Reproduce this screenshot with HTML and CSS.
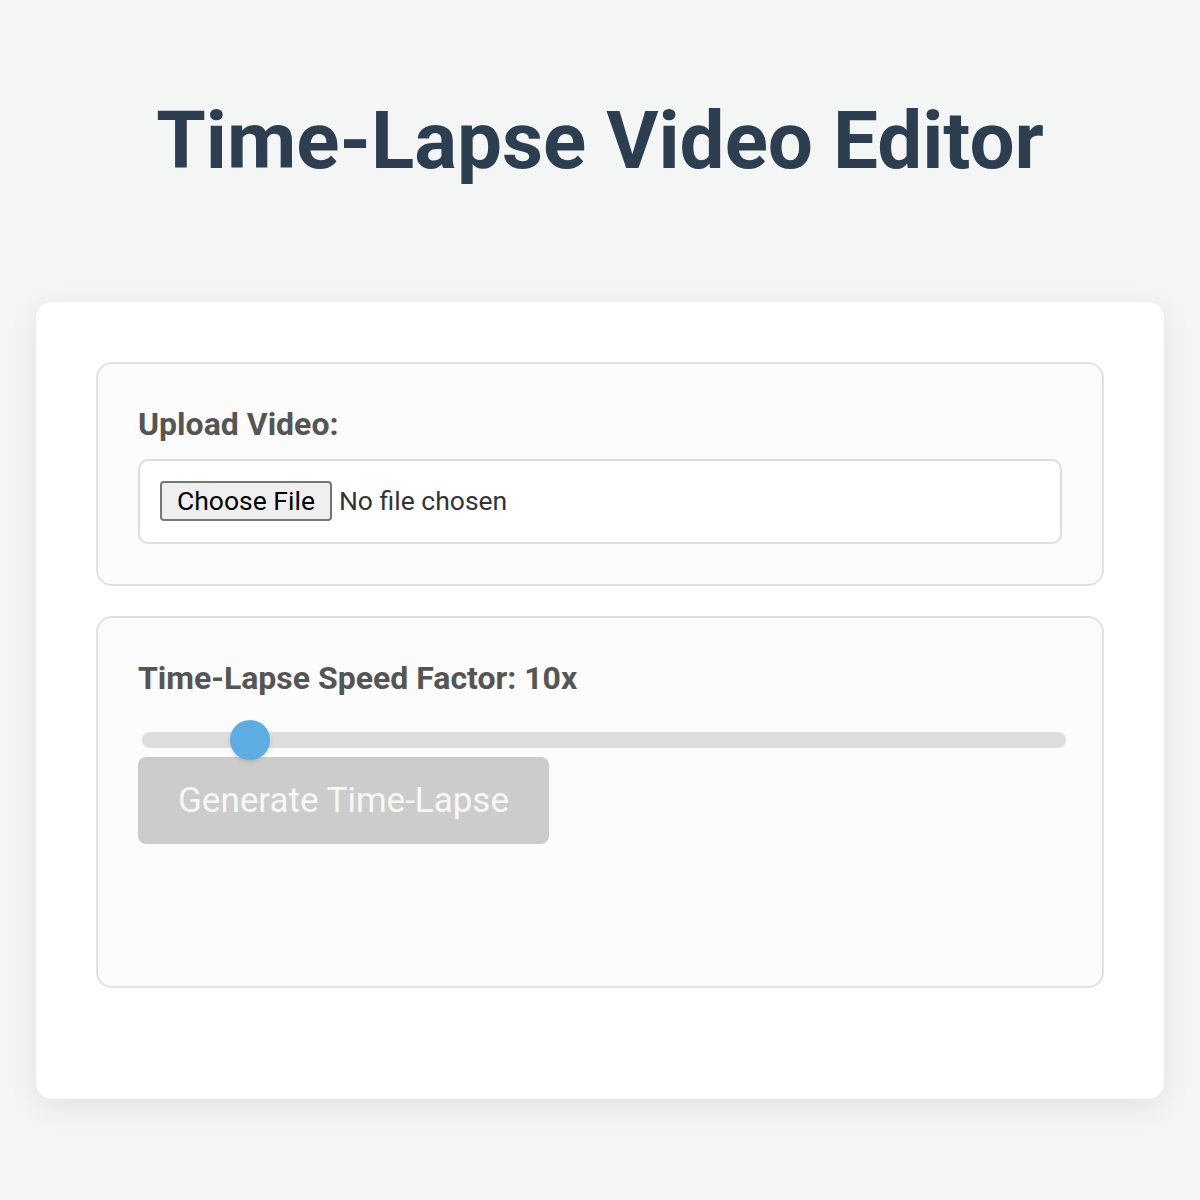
FILE: index.html
```html
<!DOCTYPE html>
<html lang="en">
<head>
    <meta charset="UTF-8">
    <meta name="viewport" content="width=device-width, initial-scale=1.0">
    <title>Time-Lapse Video Editor</title>
    <link rel="stylesheet" href="styles.css">
</head>
<body>
    <h1 class="title">Time-Lapse Video Editor</h1>

    <div class="editor">
        <div class="panel">
            <label class="panel-label" for="video">Upload Video:</label>
            <input type="file" id="video" class="file-input" accept="video/*">
        </div>

        <div class="panel">
            <label class="panel-label" for="speed">Time-Lapse Speed Factor: <span id="speed-value">10</span>x</label>
            <input type="range" id="speed" class="speed-slider" min="0" max="100" value="10">
            <button id="generate" class="generate-btn" disabled>Generate Time-Lapse</button>
            <div class="preview"></div>
        </div>

        <div class="status"></div>
    </div>

    <script>
        const speed = document.getElementById('speed');
        const speedValue = document.getElementById('speed-value');
        const video = document.getElementById('video');
        const generate = document.getElementById('generate');

        speed.addEventListener('input', () => {
            speedValue.textContent = speed.value;
        });

        video.addEventListener('change', () => {
            generate.disabled = !video.files.length;
        });
    </script>
</body>
</html>
```

FILE: styles.css
```css
body {
    margin: 0;
    padding: 40px 36px;
    background-color: #f4f6f6;
    font-family: Roboto, "Liberation Sans", Arial, sans-serif;
}
.title {
    margin: 53.6px 0;
    text-align: center;
    font-size: 80px;
    font-weight: 700;
    color: #2c3e50;
}
.editor {
    margin-top: 114px;
    padding: 60px;
    background-color: #ffffff;
    border-radius: 16px;
    box-shadow: 0 8px 30px rgba(0, 0, 0, 0.08);
}
.panel {
    margin-bottom: 30px;
    padding: 40px;
    background-color: #fcfcfc;
    border: 2px solid #e2e2e2;
    border-radius: 16px;
}
.panel-label {
    display: block;
    margin-bottom: 15px;
    font-size: 32px;
    line-height: 40px;
    font-weight: 700;
    color: #555555;
}
.file-input {
    display: block;
    box-sizing: border-box;
    width: 100%;
    height: 85px;
    padding: 20px;
    background-color: #ffffff;
    border: 2px solid #dddddd;
    border-radius: 10px;
    font-family: Roboto, "Liberation Sans", Arial, sans-serif;
    font-size: 26.5px;
    color: #333333;
}
.file-input::file-selector-button {
    margin-right: 7px;
    padding: 2px 15px;
    background-color: #efefef;
    border: 2px solid #767676;
    border-radius: 4px;
    font: inherit;
    line-height: 32px;
    color: #000000;
}
.speed-slider {
    -webkit-appearance: none;
    appearance: none;
    display: block;
    width: 100%;
    height: 16px;
    margin: 34px 0 9px 4px;
    background: transparent;
}
.speed-slider::-webkit-slider-runnable-track {
    height: 16px;
    background-color: #dddddd;
    border-radius: 8px;
}
.speed-slider::-webkit-slider-thumb {
    -webkit-appearance: none;
    width: 40px;
    height: 40px;
    margin-top: -12px;
    background-color: #5dade2;
    border-radius: 50%;
    box-shadow: 0 2px 4px rgba(0, 0, 0, 0.12);
}
.generate-btn {
    display: block;
    padding: 24px 40px;
    background-color: #cccccc;
    border: none;
    border-radius: 8px;
    font-family: Roboto, "Liberation Sans", Arial, sans-serif;
    font-size: 35px;
    line-height: 39px;
    color: #f7f7f7;
}
.preview {
    min-height: 102px;
}
.status {
    min-height: 21px;
}
```
